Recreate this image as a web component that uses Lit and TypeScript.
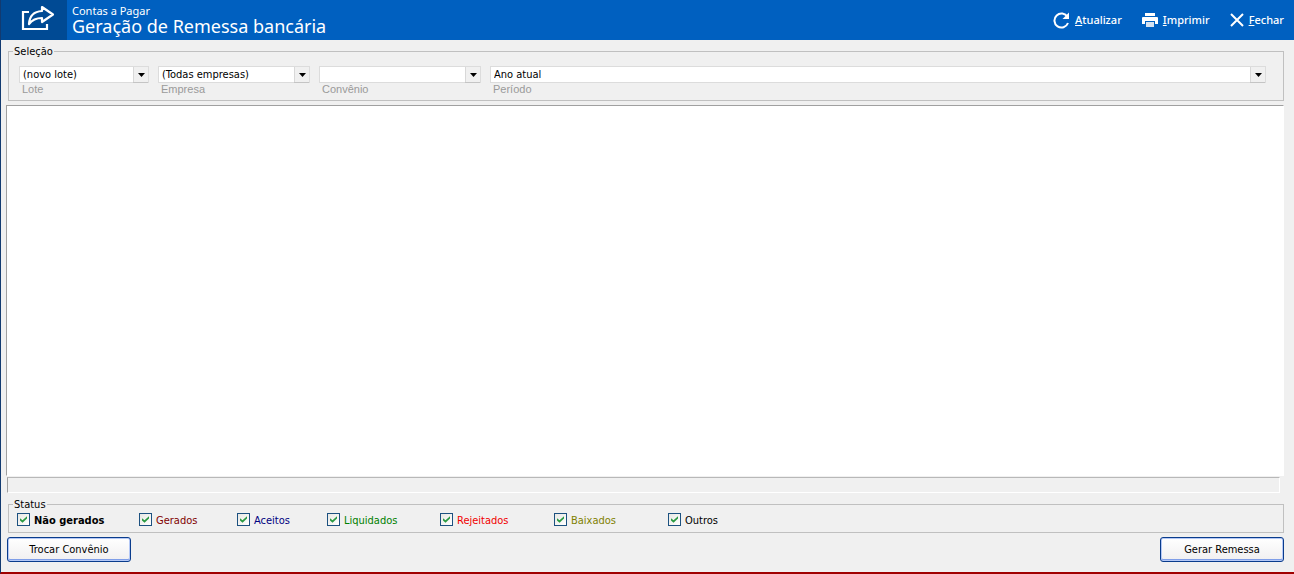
import { LitElement, html, css, svg } from "lit";
import { customElement, property } from "lit/decorators.js";
import { classMap } from "lit/directives/class-map.js";

interface StatusOption {
  id: string;
  label: string;
}

const STATUSES: StatusOption[] = [
  { id: "nao-gerados", label: "Não gerados" },
  { id: "gerados", label: "Gerados" },
  { id: "aceitos", label: "Aceitos" },
  { id: "liquidados", label: "Liquidados" },
  { id: "rejeitados", label: "Rejeitados" },
  { id: "baixados", label: "Baixados" },
  { id: "outros", label: "Outros" },
];

@customElement("combo-field")
export class ComboField extends LitElement {
  @property() label = "";
  @property() value = "";

  static styles = css`
    :host {
      display: block;
    }
    .box {
      display: grid;
      grid-template-columns: 1fr 15px;
      height: 17px;
      box-sizing: border-box;
      border: 1px solid #dcdcdc;
      background: #fff;
    }
    .select {
      grid-area: 1 / 1 / 2 / 3;
      appearance: none;
      min-width: 0;
      margin: 0;
      padding: 0 18px 0 3px;
      border: 0;
      border-radius: 0;
      background: transparent;
      color: #000;
      font: 11px/15px "DejaVu Sans Condensed", "DejaVu Sans", sans-serif;
    }
    .arrow {
      grid-area: 1 / 2;
      display: flex;
      align-items: center;
      justify-content: center;
      border-left: 1px solid #d8d8d8;
      background: #f0f0f0;
      box-shadow: 0 1px 0 #c4c4c4;
      pointer-events: none;
    }
    .label {
      display: block;
      padding-left: 3px;
      color: #9a9a9a;
      font: 11px/13px "Liberation Sans", Arial, sans-serif;
    }
  `;

  render() {
    return html`
      <div class="box">
        <select class="select" id="field">
          <option>${this.value}</option>
        </select>
        <span class="arrow">
          <svg width="7" height="4" viewBox="0 0 7 4" aria-hidden="true">
            <path d="M0 0H7L3.5 4Z" fill="#000" />
          </svg>
        </span>
      </div>
      <label class="label" for="field">${this.label}</label>
    `;
  }
}

@customElement("app-root")
export class AppRoot extends LitElement {
  static styles = css`
    :host {
      display: flex;
      flex-direction: column;
      box-sizing: border-box;
      min-height: 100vh;
      border-left: 1px solid #123a70;
      border-bottom: 2px solid #a00000;
      background: #f0f0f0;
      color: #000;
      font: 11px/13px "DejaVu Sans Condensed", "DejaVu Sans", sans-serif;
    }
    .header {
      display: flex;
      align-items: stretch;
      height: 40px;
      background: #0060c0;
      color: #fff;
      font-family: "Noto Sans", "Open Sans", sans-serif;
    }
    .emblem {
      display: flex;
      align-items: center;
      justify-content: center;
      width: 66px;
      background: #004a94;
    }
    .emblem svg {
      padding: 0 0 4px 8px;
    }
    .titles {
      flex: 1;
      padding: 4px 0 0 5px;
    }
    .module {
      margin: 0;
      font-size: 11px;
      line-height: 14px;
    }
    .title {
      margin: 0;
      font-size: 18px;
      font-weight: 400;
      line-height: 16px;
    }
    .actions {
      display: flex;
      align-items: center;
      gap: 20px;
      padding-right: 10px;
    }
    .action {
      display: flex;
      align-items: center;
      gap: 5px;
      padding: 0;
      border: 0;
      background: none;
      color: inherit;
      font: 500 11px/14px "Noto Sans", "Open Sans", sans-serif;
    }
    .group {
      min-width: 0;
      margin: 0 10px 0 7px;
      padding: 0;
      border: 1px solid #c0c0c0;
    }
    .group legend {
      margin-left: 4px;
      padding: 2px 1px 0;
      line-height: 12px;
    }
    .selection {
      margin-top: 4px;
    }
    .filters {
      display: grid;
      grid-template-columns: 130px 152px 162px 1fr;
      gap: 9px;
      padding: 8px 17px 4px 10px;
    }
    .results {
      flex: 1;
      margin: 4px 10px 0 5px;
      border: 1px solid #a0a0a0;
      border-right-color: #fff;
      border-bottom-color: #fff;
      background: #fff;
    }
    .progress {
      height: 14px;
      margin: 1px 14px 0 6px;
      border: 1px solid #fff;
      border-top-color: #b8b8b8;
      border-left-color: #a0a0a0;
    }
    .status {
      margin-top: 4px;
    }
    .checks {
      display: grid;
      grid-template-columns: 122px 98px 90px 113px 114px 114px auto;
      padding: 1px 0 5px 8px;
    }
    .check {
      display: flex;
      align-items: center;
      justify-self: start;
      gap: 4px;
      line-height: 13px;
    }
    .check span {
      padding-top: 2px;
    }
    .tick {
      appearance: none;
      display: grid;
      width: 13px;
      height: 13px;
      box-sizing: border-box;
      margin: 0;
      border: 1px solid #1c5180;
      background: linear-gradient(135deg, #e8e8e4, #fff);
    }
    .tick:checked::after {
      content: "";
      margin: 2px;
      background: #2a9a42;
      clip-path: polygon(0 32%, 36% 62%, 100% 4%, 100% 36%, 36% 96%, 0 64%);
    }
    .nao-gerados {
      font-weight: 700;
    }
    .gerados {
      color: #800000;
    }
    .aceitos {
      color: #000080;
    }
    .liquidados {
      color: #008000;
    }
    .rejeitados {
      color: #f00000;
    }
    .baixados {
      color: #808000;
    }
    .footer {
      display: flex;
      justify-content: space-between;
      padding: 4px 10px 10px 6px;
    }
    .button {
      width: 124px;
      height: 25px;
      padding: 0;
      border: 1px solid #0a3c8c;
      border-radius: 3px;
      background: linear-gradient(#fff, #f0eff0);
      box-shadow: inset 0 0 0 1px #b4c8f6, inset 0 -1px 0 1px #7f9ee8;
      color: #000;
      font: inherit;
    }
  `;

  private shareIcon() {
    return svg`<svg width="34" height="26" viewBox="0 0 34 26" fill="none" stroke="#fff" stroke-width="2.2" stroke-linejoin="round" aria-hidden="true">
      <path d="M8 7H2V24H26V19" stroke-linejoin="miter" />
      <path d="M21 2L32 9.500L21 17V13C14 13 11 15 8 19C8.500 11 13 6.500 21 6Z" />
    </svg>`;
  }

  private refreshIcon() {
    return svg`<svg width="17" height="17" viewBox="0 0 17 17" fill="none" stroke="#fff" stroke-width="2" aria-hidden="true">
      <path d="M14.500 5A7 7 0 1 0 15 11" />
      <path d="M16 0.500V7H9.500Z" fill="#fff" stroke="none" />
    </svg>`;
  }

  private printIcon() {
    return svg`<svg width="16" height="16" viewBox="0 0 16 16" fill="#fff" aria-hidden="true">
      <path d="M3 1H13V4H3Z" />
      <path d="M1 5H15Q16 5 16 6V12H13V9H3V12H0V6Q0 5 1 5Z" />
      <path d="M4 10H12V15H4Z" fill="#d5e2f1" />
    </svg>`;
  }

  private closeIcon() {
    return svg`<svg width="14" height="14" viewBox="0 0 14 14" fill="none" stroke="#fff" stroke-width="2" aria-hidden="true">
      <path d="M1 1L13 13M13 1L1 13" />
    </svg>`;
  }

  render() {
    return html`
      <header class="header">
        <div class="emblem">${this.shareIcon()}</div>
        <div class="titles">
          <p class="module">Contas a Pagar</p>
          <h1 class="title">Geração de Remessa bancária</h1>
        </div>
        <div class="actions">
          <button class="action">${this.refreshIcon()}<span><u>A</u>tualizar</span></button>
          <button class="action">${this.printIcon()}<span><u>I</u>mprimir</span></button>
          <button class="action">${this.closeIcon()}<span><u>F</u>echar</span></button>
        </div>
      </header>

      <fieldset class="group selection">
        <legend>Seleção</legend>
        <div class="filters">
          <combo-field label="Lote" value="(novo lote)"></combo-field>
          <combo-field label="Empresa" value="(Todas empresas)"></combo-field>
          <combo-field label="Convênio"></combo-field>
          <combo-field label="Período" value="Ano atual"></combo-field>
        </div>
      </fieldset>

      <main class="results"></main>
      <div class="progress"></div>

      <fieldset class="group status">
        <legend>Status</legend>
        <div class="checks">
          ${STATUSES.map(
            (s) => html`
              <label class=${classMap({ check: true, [s.id]: true })}>
                <input class="tick" type="checkbox" checked />
                <span>${s.label}</span>
              </label>
            `
          )}
        </div>
      </fieldset>

      <footer class="footer">
        <button class="button">Trocar Convênio</button>
        <button class="button">Gerar Remessa</button>
      </footer>
    `;
  }
}
